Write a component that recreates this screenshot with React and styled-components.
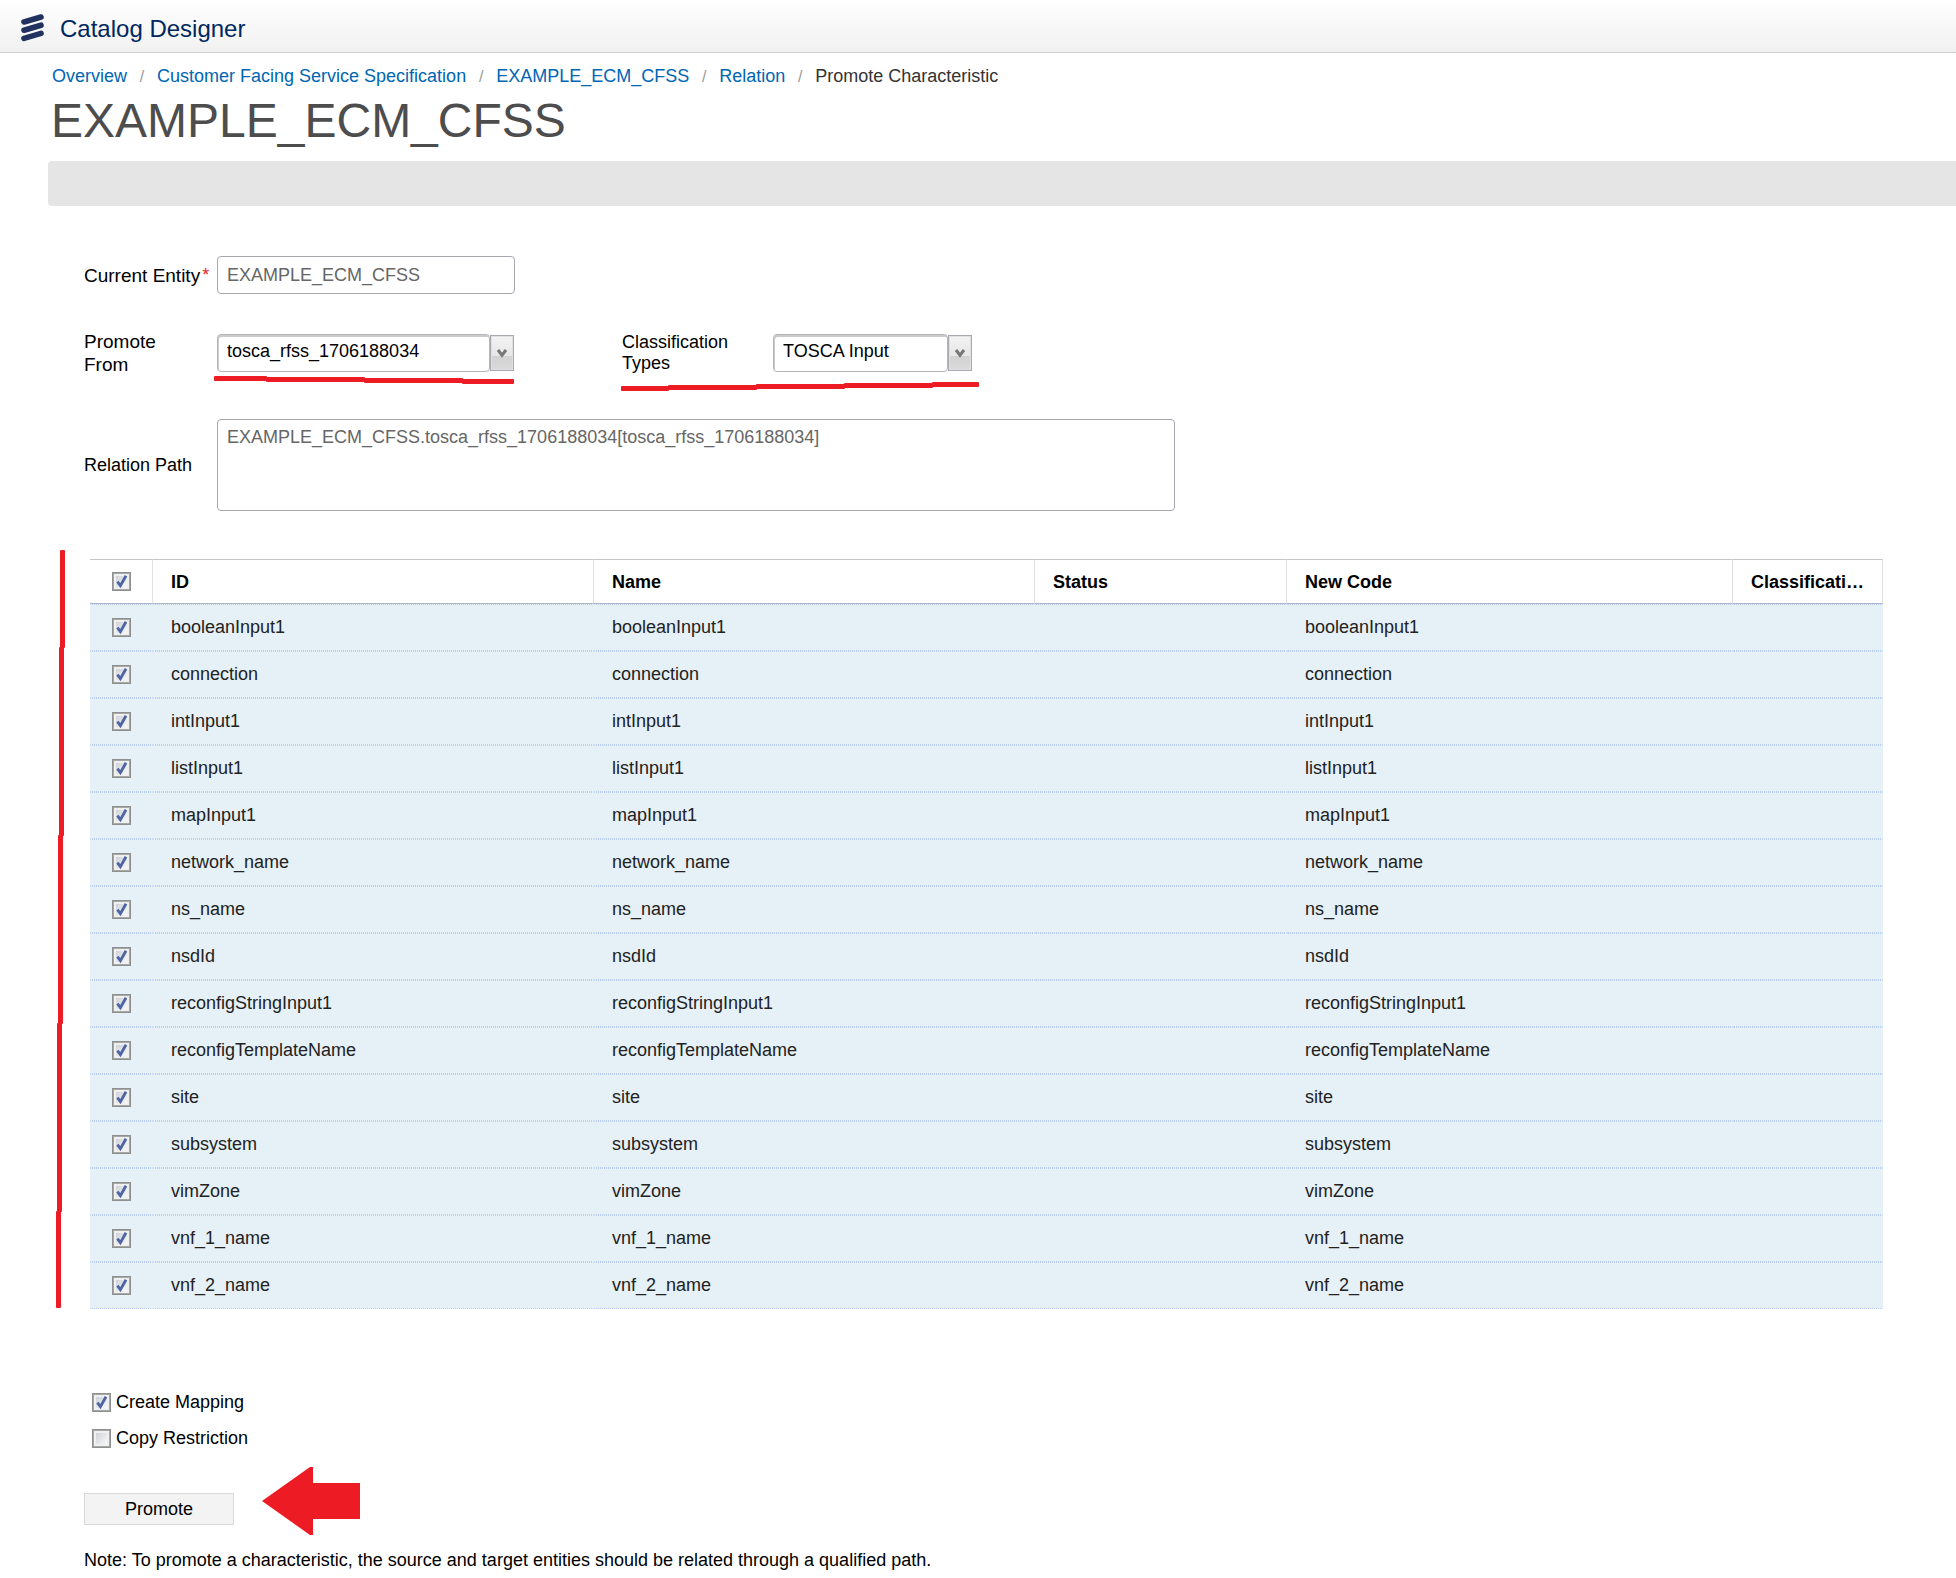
import React, { useState } from "react";
import styled, { createGlobalStyle } from "styled-components";

const RED = "#ed1c24";

const GlobalStyle = createGlobalStyle`
  *, *::before, *::after { box-sizing: border-box; }
  body {
    margin: 0;
    background: #fff;
    color: #000;
    font: 18px/22px "Liberation Sans", Arial, sans-serif;
  }
  input, select, textarea, button { font: inherit; color: inherit; margin: 0; }
`;

const TopBar = styled.header`
  display: flex;
  align-items: center;
  gap: 15px;
  height: 53px;
  padding: 0 20px;
  border-bottom: 1px solid #cfcfcf;
  background: linear-gradient(#ffffff, #f1f1f1);
`;

const AppName = styled.span`
  padding-top: 6px;
  font-size: 24px;
  line-height: 28px;
  color: #00285f;
`;

const LogoMark = styled.svg`
  display: block;
  margin-top: 3px;
`;

const Breadcrumbs = styled.nav`
  padding: 12px 52px 0;

  ol {
    display: flex;
    flex-wrap: wrap;
    margin: 0;
    padding: 0;
    list-style: none;
  }
  li + li::before {
    content: "/";
    display: inline-block;
    width: 30px;
    text-align: center;
    font-size: 16px;
    color: #999;
  }
`;

const CrumbLink = styled.a`
  color: #0066b3;
  text-decoration: none;
`;

const CurrentCrumb = styled.span`
  color: #333;
`;

const Title = styled.h1`
  margin: 5px 0 12px;
  padding: 0 51px;
  font-size: 48px;
  line-height: 56px;
  font-weight: 400;
  color: #4d4d4d;
`;

const ActionBar = styled.div`
  height: 45px;
  margin-left: 48px;
  border-radius: 4px 0 0 4px;
  background: #e5e5e5;
`;

const Form = styled.form`
  padding: 50px 73px 8px 84px;
`;

const FieldRow = styled.div`
  display: flex;
  align-items: center;
  margin-bottom: ${(p) => p.$gap}px;
`;

const LabelCell = styled.div`
  flex: none;
  width: ${(p) => p.$width}px;
`;

const Label = styled.label`
  display: block;
  width: ${(p) => (p.$stacked ? "min-content" : "auto")};
  font-size: ${(p) => (p.$large ? 19 : 18)}px;
  line-height: ${(p) => (p.$large ? 23 : 21)}px;
`;

const Required = styled.sup`
  margin-left: 2px;
  font-size: 18px;
  line-height: 0;
  vertical-align: 1px;
  color: #f02020;
`;

const TextInput = styled.input`
  width: 298px;
  height: 38px;
  padding: 0 9px;
  border: 1px solid #a5a8b3;
  border-radius: 4px;
  background: #fff;
  color: #666;
`;

const PathArea = styled.textarea`
  display: block;
  width: 958px;
  height: 92px;
  padding: 6px 9px;
  border: 1px solid #a5a8b3;
  border-radius: 4px;
  background: #fff;
  color: #666;
  resize: none;
`;

const Combo = styled.div`
  display: grid;
  grid-template-columns: 1fr 24px;
  align-items: center;
  width: ${(p) => p.$width}px;
  height: 38px;
`;

const ComboFrame = styled.span`
  grid-area: 1 / 1;
  height: 38px;
  border: 1px solid #b4b4b8;
  border-radius: 4px;
  box-shadow: inset 1px 2px 0 #cbcbcb;
`;

const ComboTrigger = styled.span`
  grid-area: 1 / 2;
  display: flex;
  align-items: center;
  justify-content: center;
  height: 36px;
  border: 1px solid #a9a9b4;
  background: linear-gradient(#f3f3f3, #e6e6e6 60%, #d2d2d2 60%, #dadada);
  box-shadow: inset 0 0 0 1px #e0e0e0;
`;

const ComboSelect = styled.select`
  grid-area: 1 / 1 / 2 / 3;
  z-index: 1;
  width: 100%;
  height: 38px;
  padding: 0 26px 4px 10px;
  border: 0;
  background: transparent;
  appearance: none;
`;

const Annotated = styled.div`
  position: relative;
  display: flex;
  align-items: center;
`;

const Mark = styled.svg`
  position: absolute;
  left: ${(p) => p.$left}px;
  top: ${(p) => p.$top}px;
  z-index: 2;
  pointer-events: none;
`;

const TableArea = styled.div`
  position: relative;
  margin-left: 6px;
`;

const Grid = styled.table`
  width: 100%;
  table-layout: fixed;
  border-collapse: separate;
  border-spacing: 0;
`;

const HeadCell = styled.th`
  height: 45px;
  padding: 0 17px 0 18px;
  border-top: 1px solid #c6c6c6;
  border-bottom: 1px solid #adb7c9;
  border-right: 1px solid #e1e1e1;
  text-align: left;
  vertical-align: middle;
  font-weight: 700;
  overflow: hidden;
  text-overflow: ellipsis;
  white-space: nowrap;
`;

const Cell = styled.td`
  height: 47px;
  padding: 0 17px 1px;
  border: 1px dotted transparent;
  border-top-color: #b9cdf0;
  border-bottom-color: #b9cdf0;
  background: #e5f0f7;
  color: #222;
`;

const CheckHead = styled(HeadCell)`
  padding: 0;
`;

const CheckCell = styled(Cell)`
  padding: 0;
`;

const Tick = styled.span`
  display: grid;
  flex: none;
  width: 19px;
  height: 19px;
  margin: ${(p) => (p.$centered ? "0 auto" : "0")};

  input, svg { grid-area: 1 / 1; }
  input {
    width: 19px;
    height: 19px;
    border: 1px solid #8e8f8f;
    background: linear-gradient(135deg, #c3c8d0, #f6f6f6 80%);
    box-shadow: inset 0 0 0 1px #a6a7a7, inset 0 0 0 3px #f0f0f0;
    appearance: none;
  }
  svg {
    z-index: 1;
    visibility: hidden;
    pointer-events: none;
  }
  input:checked + svg { visibility: visible; }
`;

const Options = styled.div`
  display: grid;
  gap: 14px;
  padding: 82px 8px 0;
`;

const Option = styled.div`
  display: flex;
  align-items: center;
  gap: 5px;
`;

const PromoteRow = styled.div`
  position: relative;
  display: flex;
  margin: 44px 0 24px;
`;

const PromoteButton = styled.button`
  width: 150px;
  height: 32px;
  padding: 0;
  border: 1px solid #d9d9d9;
  background: #f3f3f3;
`;

const Note = styled.p`
  margin: 0;
`;

const crumbs = ["Overview", "Customer Facing Service Specification", "EXAMPLE_ECM_CFSS", "Relation"];

const columns = [
  { title: "ID", width: 441 },
  { title: "Name", width: 441 },
  { title: "Status", width: 252 },
  { title: "New Code", width: 446 },
  { title: "Classification Types", width: 150 },
];

const characteristics = [
  "booleanInput1", "connection", "intInput1", "listInput1", "mapInput1",
  "network_name", "ns_name", "nsdId", "reconfigStringInput1",
  "reconfigTemplateName", "site", "subsystem", "vimZone", "vnf_1_name", "vnf_2_name",
];

function Logo() {
  return (
    <LogoMark width="25" height="29" viewBox="0 0 25 29" aria-hidden="true">
      <g stroke="#22325f" strokeWidth="5.6" strokeLinecap="round">
        <path d="M4 9 L21 4" />
        <path d="M4 17.2 L21 12.2" />
        <path d="M4 25.4 L21 20.4" />
      </g>
    </LogoMark>
  );
}

function CheckBox({ centered, ...props }) {
  return (
    <Tick $centered={centered}>
      <input type="checkbox" {...props} />
      <svg width="19" height="19" viewBox="0 0 19 19" fill="none" aria-hidden="true">
        <path d="M5.4 9.6 L8.4 13.6 L14 3.8" stroke="#4f64a3" strokeWidth="2.8" />
      </svg>
    </Tick>
  );
}

function ComboBox({ id, value, width }) {
  return (
    <Combo $width={width}>
      <ComboFrame />
      <ComboTrigger>
        <svg width="10" height="9" viewBox="0 0 10 9" fill="none" aria-hidden="true">
          <path d="M1 1 L5 6.2 L9 1" stroke="#777" strokeWidth="3" />
        </svg>
      </ComboTrigger>
      <ComboSelect id={id} defaultValue={value}>
        <option>{value}</option>
      </ComboSelect>
    </Combo>
  );
}

/* Hand-drawn line made of [x, y, width, height] strokes. */
function RedLine({ left, top, width, height, strokes }) {
  return (
    <Mark $left={left} $top={top} width={width} height={height} aria-hidden="true">
      {strokes.map(([x, y, w, h]) => (
        <rect key={`${x}-${y}`} x={x} y={y} width={w} height={h} rx="1" fill={RED} />
      ))}
    </Mark>
  );
}

export default function App() {
  const [selected, setSelected] = useState(() => new Set(characteristics));
  const allSelected = selected.size === characteristics.length;

  const toggle = (name) =>
    setSelected((prev) => {
      const next = new Set(prev);
      if (!next.delete(name)) next.add(name);
      return next;
    });

  return (
    <>
      <GlobalStyle />
      <TopBar>
        <Logo />
        <AppName>Catalog Designer</AppName>
      </TopBar>
      <main>
        <Breadcrumbs aria-label="Breadcrumb">
          <ol>
            {crumbs.map((c) => (
              <li key={c}><CrumbLink href="#">{c}</CrumbLink></li>
            ))}
            <li><CurrentCrumb aria-current="page">Promote Characteristic</CurrentCrumb></li>
          </ol>
        </Breadcrumbs>
        <Title>EXAMPLE_ECM_CFSS</Title>
        <ActionBar />

        <Form onSubmit={(e) => e.preventDefault()}>
          <FieldRow $gap={36}>
            <LabelCell $width={133}>
              <Label htmlFor="entity" $large>Current Entity<Required>*</Required></Label>
            </LabelCell>
            <TextInput id="entity" type="text" readOnly value="EXAMPLE_ECM_CFSS" />
          </FieldRow>

          <FieldRow $gap={43}>
            <Annotated>
              <LabelCell $width={133}>
                <Label htmlFor="from" $large $stacked>Promote From</Label>
              </LabelCell>
              <ComboBox id="from" value="tosca_rfss_1706188034" width={297} />
              <RedLine left={130} top={46} width={300} height={8}
                strokes={[[0, 0, 53, 5], [52, 1, 99, 5], [150, 2, 99, 5], [248, 3, 52, 5]]} />
            </Annotated>
            <LabelCell $width={108} />
            <Annotated>
              <LabelCell $width={151}>
                <Label htmlFor="types" $stacked>Classification Types</Label>
              </LabelCell>
              <ComboBox id="types" value="TOSCA Input" width={199} />
              <RedLine left={-1} top={50} width={358} height={10}
                strokes={[[0, 4, 48, 5], [47, 3, 89, 5], [135, 2, 89, 5], [223, 1, 89, 5], [311, 0, 47, 5]]} />
            </Annotated>
          </FieldRow>

          <FieldRow $gap={48}>
            <LabelCell $width={133}>
              <Label htmlFor="path">Relation Path</Label>
            </LabelCell>
            <PathArea id="path" readOnly value="EXAMPLE_ECM_CFSS.tosca_rfss_1706188034[tosca_rfss_1706188034]" />
          </FieldRow>

          <TableArea>
            <RedLine left={-34} top={-9} width={9} height={758}
              strokes={[[4, 0, 5, 98], [3, 97, 5, 189], [2, 285, 5, 189], [1, 473, 5, 189], [0, 661, 5, 97]]} />
            <Grid>
              <colgroup>
                <col width="63" />
                {columns.map((c) => <col key={c.title} width={c.width} />)}
              </colgroup>
              <thead>
                <tr>
                  <CheckHead scope="col">
                    <CheckBox
                      centered
                      aria-label="Select all"
                      checked={allSelected}
                      onChange={() => setSelected(new Set(allSelected ? [] : characteristics))}
                    />
                  </CheckHead>
                  {columns.map((c) => <HeadCell key={c.title} scope="col">{c.title}</HeadCell>)}
                </tr>
              </thead>
              <tbody>
                {characteristics.map((name) => (
                  <tr key={name}>
                    <CheckCell>
                      <CheckBox
                        centered
                        aria-label={`Select ${name}`}
                        checked={selected.has(name)}
                        onChange={() => toggle(name)}
                      />
                    </CheckCell>
                    <Cell>{name}</Cell>
                    <Cell>{name}</Cell>
                    <Cell />
                    <Cell>{name}</Cell>
                    <Cell />
                  </tr>
                ))}
              </tbody>
            </Grid>
          </TableArea>

          <Options>
            <Option>
              <CheckBox id="mapping" defaultChecked />
              <label htmlFor="mapping">Create Mapping</label>
            </Option>
            <Option>
              <CheckBox id="restriction" />
              <label htmlFor="restriction">Copy Restriction</label>
            </Option>
          </Options>

          <PromoteRow>
            <PromoteButton type="submit">Promote</PromoteButton>
            <Mark $left={178} $top={-26} width="98" height="68" viewBox="0 0 98 68" aria-hidden="true">
              <path d="M0 34 L48 0 H51 V16 H98 V52 H51 V68 H48 Z" fill={RED} />
            </Mark>
          </PromoteRow>
          <Note>
            Note: To promote a characteristic, the source and target entities should be related through a
            qualified path.
          </Note>
        </Form>
      </main>
    </>
  );
}
